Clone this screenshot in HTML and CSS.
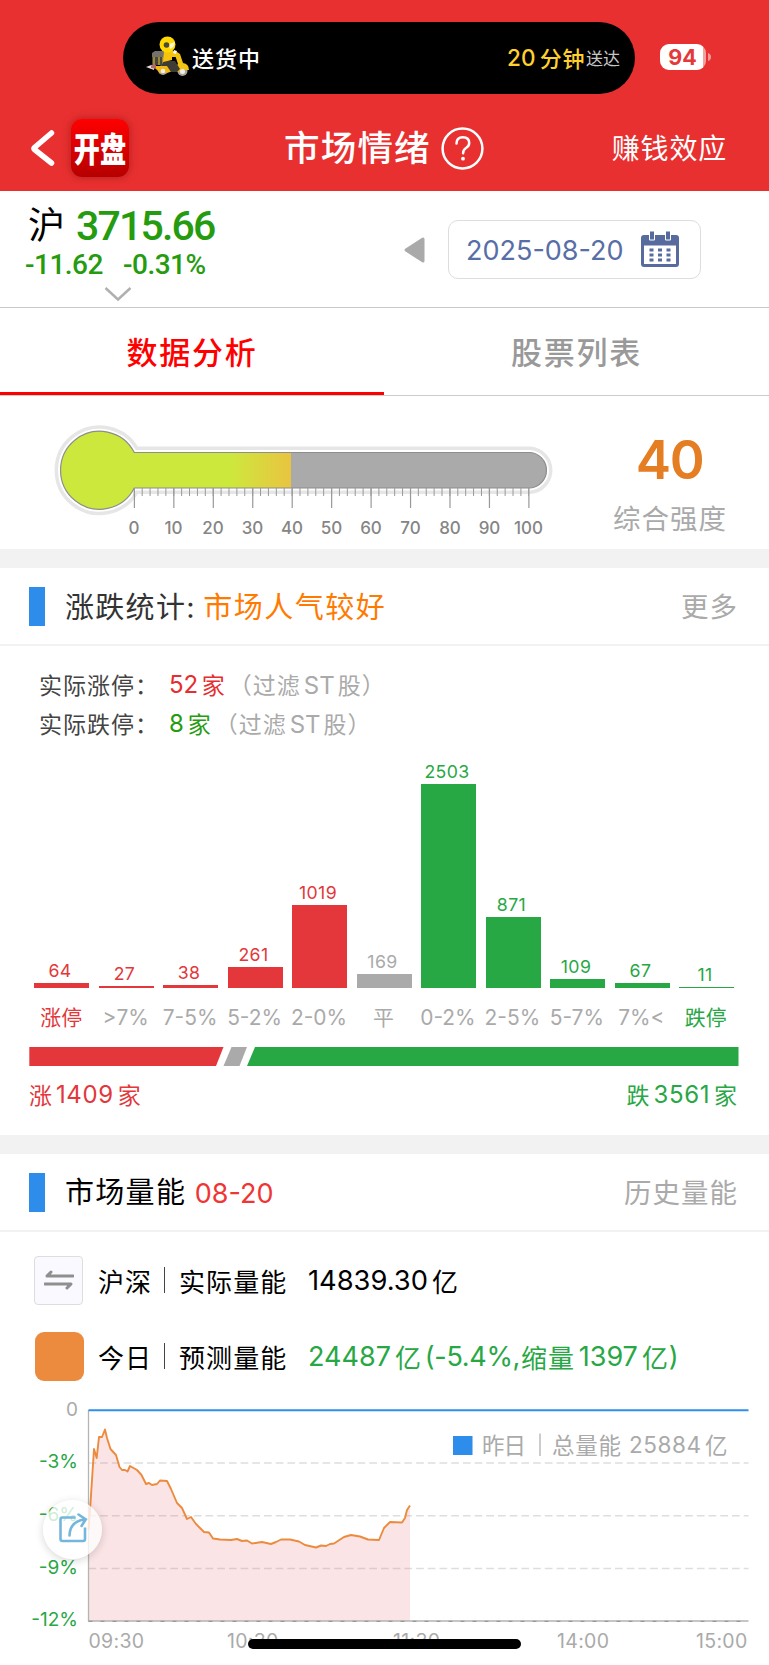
FILE: index.html
```html
<!DOCTYPE html>
<html lang="zh-CN">
<head>
<meta charset="utf-8">
<title>市场情绪</title>
<link rel="stylesheet" href="styles.css">
</head>
<body>
<header class="top">
  <div class="status">
    <div class="island">
      <svg class="rider" width="44" height="42" viewBox="0 0 44 42">
        <path d="M0 31l8-3v6z" fill="#e8dfe6"/><path d="M5 29.500l5-1.500v5l-5-1z" fill="#b5686a"/>
        <circle cx="17" cy="34" r="5" fill="#a8a49a"/><circle cx="36.500" cy="35" r="5" fill="#aaa69c"/>
        <path d="M6 17l3-2h14l-1 14H6z" fill="#74716a"/><path d="M6 21h12v8H6z" fill="#49463d"/>
        <path d="M8 21v8M13 21v8M17 21v8" stroke="#d2b42c" stroke-width="1.200" fill="none"/>
        <path d="M31 16l3 2 3 9q6 1 6 7h-5l-7 2-4-3 5-5-3-9z" fill="#f2c414"/>
        <path d="M10 30h12l5 5-6 2H14l-4-4z" fill="#f2b814"/>
        <path d="M18 25h11l5 8-3 3h-6l-4-6h-6z" fill="#3e3c35"/>
        <path d="M18 15h9l5 2 1 4h-7v3l-9 2z" fill="#f6c40f"/>
        <circle cx="21.500" cy="8.500" r="8" fill="#ffd900"/><path d="M23 8l6-2q-1 6-5 7z" fill="#fff6c8"/><circle cx="20.500" cy="9" r="2.800" fill="#4a4a35"/>
        <path d="M28 14l3 1-1 3-3-1z" fill="#fff"/><circle cx="17" cy="35" r="2.300" fill="#eee"/><circle cx="36.500" cy="35.500" r="2.500" fill="#eee"/>
      </svg>
      <span class="delivering">送货中</span>
      <span class="eta"><b>20</b><b class="mins">分钟</b><i>送达</i></span>
    </div>
    <div class="battery"><span>94</span></div>
    <svg class="nub" width="6" height="10" viewBox="0 0 6 10"><path d="M1 1q3 1 3 4t-3 4z" fill="#f19a98"/></svg>
  </div>
  <nav class="titlebar">
    <svg class="back" width="26" height="38" viewBox="0 0 26 38"><path d="M22.500 4L5.500 18.500Q4.500 19.500 5.500 20.500L22.500 34" fill="none" stroke="#fff" stroke-width="5.500" stroke-linecap="round" stroke-linejoin="round"/></svg>
    <div class="app"><span>开盘</span></div>
    <h1>市场情绪</h1>
    <svg class="help" width="43" height="43" viewBox="0 0 43 43"><circle cx="21.500" cy="21.500" r="19.900" fill="none" stroke="#fff" stroke-width="2.500"/><path d="M15.500 16.500q0-6.300 6.400-6.300 6.300 0 6.300 5.800 0 3.100-3.200 5-2.900 1.800-2.900 5.200" fill="none" stroke="#fff" stroke-width="2.500" stroke-linecap="round"/><circle cx="22" cy="31.700" r="1.900" fill="#fff"/></svg>
    <a class="effect">赚钱效应</a>
  </nav>
</header>

<section class="indexbar">
  <div class="quote">
    <div class="main"><span>沪</span><b>3715.66</b></div>
    <div class="delta"><span>-11.62</span><span>-0.31%</span></div>
    <svg class="chev" width="30" height="16" viewBox="0 0 30 16"><path d="M2.500 2L15 13.500 27.500 2" fill="none" stroke="#b0b0b0" stroke-width="2.500"/></svg>
  </div>
  <svg class="prev" width="22" height="28" viewBox="0 0 22 28"><path d="M2 14L19 3V25Z" fill="#aaa" stroke="#aaa" stroke-width="3" stroke-linejoin="round"/></svg>
  <div class="date"><span>2025-08-20</span>
    <svg width="38" height="36" viewBox="0 0 38 36"><rect y="4" width="38" height="32" rx="3" fill="#586b9f"/><rect x="3" y="14.500" width="32" height="18.500" fill="#fff"/><path d="M8.500 0h5v9h-5zM24.500 0h5v9h-5z" fill="#586b9f" stroke="#fff" stroke-width="1"/><path d="M10.500 17.500v13M19 17.500v13M27.500 17.500v13" stroke="#586b9f" stroke-width="4" stroke-dasharray="3 2"/></svg>
  </div>
</section>

<div class="tabs"><div class="tab on">数据分析</div><div class="tab">股票列表</div></div>

<section class="thermo">
  <svg width="580" height="153" viewBox="0 396 580 153">
    <defs>
      <linearGradient id="heat" gradientUnits="userSpaceOnUse" x1="230" y1="0" x2="291" y2="0"><stop offset="0" stop-color="#cde83d"/><stop offset="1" stop-color="#e9c440"/></linearGradient>
      <clipPath id="level"><rect x="50" y="420" width="241" height="100"/></clipPath>
      <path id="tube" d="M134.300 452.500H530A17.800 17.800 0 0 1 530 488H134.300A39 39 0 1 1 134.300 452.500Z"/>
    </defs>
    <use href="#tube" fill="none" stroke="#e6e6e6" stroke-width="12"/>
    <use href="#tube" fill="#aaa" stroke="#fff" stroke-width="5"/>
    <use href="#tube" fill="#aaa"/>
    <use href="#tube" fill="url(#heat)" clip-path="url(#level)"/>
    <use href="#tube" fill="none" stroke="#8e8e8e" stroke-width="1.200"/>
    <path d="M133.800 492H529" stroke="#999" stroke-width="8" stroke-dasharray="1 6.890"/>
    <path d="M133.800 498H529.500" stroke="#999" stroke-width="20" stroke-dasharray="1.200 38.250"/>
    <g class="scale"><text x="134" y="533.500">0</text><text x="173.500" y="533.500">10</text><text x="213" y="533.500">20</text><text x="252.500" y="533.500">30</text><text x="292" y="533.500">40</text><text x="331.500" y="533.500">50</text><text x="371" y="533.500">60</text><text x="410.500" y="533.500">70</text><text x="450" y="533.500">80</text><text x="489.500" y="533.500">90</text><text x="528.500" y="533.500">100</text></g>
  </svg>
  <div class="score"><b>40</b><span>综合强度</span></div>
</section>

<section class="card">
  <div class="head"><h2>涨跌统计: <em>市场人气较好</em></h2><a>更多</a></div>
  <div class="limits">
    <div class="limit"><span>实际涨停：</span><p class="up"><b>52</b><span>家</span></p><i>（过滤<u>ST</u>股）</i></div>
    <div class="limit"><span>实际跌停：</span><p class="down"><b>8</b><span>家</span></p><i>（过滤<u>ST</u>股）</i></div>
  </div>
  <div class="bars">
    <div class="col r"><span>64</span><div style="height:5px"></div></div>
    <div class="col r"><span>27</span><div style="height:2px"></div></div>
    <div class="col r"><span>38</span><div style="height:3px"></div></div>
    <div class="col r"><span>261</span><div style="height:21px"></div></div>
    <div class="col r"><span>1019</span><div style="height:83px"></div></div>
    <div class="col n"><span>169</span><div style="height:14px"></div></div>
    <div class="col g"><span>2503</span><div style="height:204px"></div></div>
    <div class="col g"><span>871</span><div style="height:71px"></div></div>
    <div class="col g"><span>109</span><div style="height:9px"></div></div>
    <div class="col g"><span>67</span><div style="height:5px"></div></div>
    <div class="col g"><span>11</span><div style="height:1px"></div></div>
  </div>
  <div class="ranges"><span class="r">涨停</span><span>&gt;7%</span><span>7-5%</span><span>5-2%</span><span>2-0%</span><span>平</span><span>0-2%</span><span>2-5%</span><span>5-7%</span><span>7%&lt;</span><span class="g">跌停</span></div>
  <svg class="ratio" width="710" height="20" viewBox="0 0 710 20"><path d="M.3 0H194.500L187 19H.3Z" fill="#e3373b"/><path d="M202.500 0H218L210.500 19H194.500Z" fill="#aaa"/><path d="M226 0H709.500V19H218Z" fill="#28a745"/></svg>
  <div class="totals"><p class="r"><span>涨</span><b>1409</b><span>家</span></p><p class="g"><span>跌</span><b>3561</b><span>家</span></p></div>
</section>

<section class="card volume">
  <div class="head"><h2>市场量能 <b>08-20</b></h2><a>历史量能</a></div>
  <div class="metrics">
    <div class="metric">
      <div class="swap"><svg width="30" height="22" viewBox="0 0 30 22"><path d="M29 7H3L7 3M1 15H27L23 19" fill="none" stroke="#8f8f8f" stroke-width="3" stroke-linecap="round" stroke-linejoin="round"/><path d="M2 6.500L7 2V7ZM28 15.500L23 20V15Z" fill="#8f8f8f"/></svg></div>
      <span>沪深</span><hr><span>实际量能</span><p><b>14839.30</b><span>亿</span></p>
    </div>
    <div class="metric">
      <div class="today"></div>
      <span>今日</span><hr><span>预测量能</span><p class="g"><b>24487</b><span>亿</span><b class="pct">(-5.4%,</b><span class="shrink">缩量</span><b>1397</b><span>亿</span><b class="close">)</b></p>
    </div>
  </div>
  <div class="chart">
    <svg width="769" height="275" viewBox="0 1390 769 275">
      <path d="M88.500 1463H748.500M88.500 1515.700H748.500M88.500 1568.500H748.500" stroke="#dedede" stroke-width="1.500" stroke-dasharray="7.700 4"/>
      <path d="M88.500 1530L90.700 1500 94 1449 96.700 1458 99 1437 102 1437 105 1429.500 107 1438 110.500 1449 116 1455 119.500 1467 122 1470 125 1470 127.500 1471.500 130 1466 137 1470 141.500 1475 146 1484 149 1483 152 1485 157 1484 160 1480.500 167 1481 171 1489 177 1503 182 1508 187 1519 191 1517 196 1524 204 1532 209 1532.500 213 1538.500 220 1539.500 231 1540 237 1539 242 1541 247 1540.500 252 1543.500 262 1542 271 1544 276 1542 281 1539.500 290 1539.500 299 1541.500 305 1545 316 1547.500 321 1545.500 326 1546 330 1544 334 1543.500 344 1537 351 1535 360 1536.500 368 1539.500 379 1540 384 1528 390 1522 402 1522.500 405 1518 407 1510 410 1505.500V1621H88.500Z" fill="#e46a6e" fill-opacity=".18"/>
      <path d="M88.500 1410V1621H748.500" stroke="#b4b4b4" stroke-width="1.300" fill="none"/>
      <path d="M88.500 1621.300H748.500" stroke="#999" stroke-width="1.300" stroke-dasharray="4 8"/>
      <path d="M88.500 1530L90.700 1500 94 1449 96.700 1458 99 1437 102 1437 105 1429.500 107 1438 110.500 1449 116 1455 119.500 1467 122 1470 125 1470 127.500 1471.500 130 1466 137 1470 141.500 1475 146 1484 149 1483 152 1485 157 1484 160 1480.500 167 1481 171 1489 177 1503 182 1508 187 1519 191 1517 196 1524 204 1532 209 1532.500 213 1538.500 220 1539.500 231 1540 237 1539 242 1541 247 1540.500 252 1543.500 262 1542 271 1544 276 1542 281 1539.500 290 1539.500 299 1541.500 305 1545 316 1547.500 321 1545.500 326 1546 330 1544 334 1543.500 344 1537 351 1535 360 1536.500 368 1539.500 379 1540 384 1528 390 1522 402 1522.500 405 1518 407 1510 410 1505.500" fill="none" stroke="#ec8b3e" stroke-width="1.900" stroke-linejoin="round"/>
      <path d="M88.500 1410.200H748.500" stroke="#2e8fec" stroke-width="2"/>
      <g class="yaxis"><text class="zero" x="78" y="1415.500">0</text><text x="78" y="1468">-3%</text><text x="78" y="1520.500">-6%</text><text x="78" y="1573.500">-9%</text><text x="78" y="1626">-12%</text></g>
      <g class="xaxis"><text x="88.500" y="1648">09:30</text><text x="227" y="1648">10:30</text><text x="393" y="1648">11:30</text><text x="557" y="1648">14:00</text><text x="696" y="1648">15:00</text></g>
      <rect x="453" y="1436" width="19.500" height="19" fill="#2e8ceb"/>
      <path d="M540 1433.500V1456" stroke="#aaa" stroke-width="1.200"/>
      <g class="legend"><text x="482" y="1453.500" textLength="44">昨日</text><text x="552" y="1453.500" textLength="69">总量能</text><text x="629" y="1453" textLength="72">25884</text><text x="705" y="1453.500">亿</text></g>
    </svg>
    <div class="share"><svg width="30" height="32" viewBox="0 0 30 32"><path d="M17.500 5.500H4.500Q2.500 5.500 2.500 7.500V27Q2.500 29 4.500 29H25Q27 29 27 27V15.500" fill="none" stroke="#75b6dc" stroke-width="2.600"/><path d="M11.500 23.500Q12 9 27 7.500M20.500 2.500L27.800 7.300 23.500 14" fill="none" stroke="#75b6dc" stroke-width="2.600" stroke-linecap="round"/></svg></div>
    <div class="homebar"></div>
  </div>
</section>
</body>
</html>
```
FILE: styles.css
```css
* { box-sizing: border-box; margin: 0; padding: 0; }
body { width: 769px; height: 1665px; overflow: hidden; background: #fff; color: #000; font-family: Inter, "Noto Sans CJK SC", sans-serif; }
svg { display: block; flex: none; }
span, b, i, em, a, u, h1, h2 { font-style: normal; text-decoration: none; font-weight: 400; white-space: nowrap; }

.top { height: 191px; background: #e93030; color: #fff; }
.status { height: 95px; padding: 22px 0 0 123px; display: flex; align-items: flex-start; }
.island { width: 512px; height: 72px; border-radius: 36px; background: #000; display: flex; align-items: center; padding: 0 15px 0 23px; }
.rider { margin-top: -2px; }
.delivering { font-size: 22px; letter-spacing: 1px; margin: -2px auto 0 2px; font-weight: 500; }
.eta { display: flex; align-items: center; color: #ffd02e; margin-top: -2px; }
.eta b { font-size: 22.500px; letter-spacing: .2px; font-weight: 500; margin-top: 1px; }
.eta .mins { margin: 0 1px 0 4px; letter-spacing: .6px; font-size: 22px; }
.eta i { font-size: 17px; color: #c6c6c6; margin-top: 1px; }
.battery { width: 46px; height: 26px; margin: 22px 0 0 25px; border-radius: 9px; background: linear-gradient(90deg, #fff 43px, #f6a09e 43px); display: grid; place-items: center; padding-right: 1px; }
.battery span { color: #e5383a; font-size: 21.500px; font-weight: 700; line-height: 27px; }
.nub { margin: 30px 0 0 1px; }
.titlebar { height: 96px; display: flex; align-items: center; padding: 10px 42px 0 29px; }
.back { margin-right: 16px; }
.app { width: 58px; height: 58px; border-radius: 11px; background: linear-gradient(#f00, #b50000); box-shadow: 0 0 8px rgba(90, 0, 0, .4); display: flex; align-items: center; justify-content: center; }
.app span { font-family: "Noto Sans CJK SC", sans-serif; font-size: 34px; line-height: 50px; font-weight: 900; transform: scaleX(.77); }
h1 { font-size: 35.500px; font-weight: 500; letter-spacing: 1.200px; margin: 1px 0 0 155px; line-height: 50px; }
.help { margin-left: 10px; }
.effect { margin-left: auto; font-size: 28px; letter-spacing: .8px; margin-top: -3px; }

.indexbar { height: 117px; border-bottom: 1px solid #c8c8c8; display: flex; }
.quote { width: 404px; padding: 13px 0 0 25px; color: #259b10; }
.main { display: flex; align-items: center; height: 44px; }
.main span { color: #000; font-size: 37px; width: 48px; margin-left: 3px; line-height: 44px; }
.main b { font: 500 41px/44px Roboto, sans-serif; letter-spacing: -1.800px; margin-top: -1px; }
.delta { display: flex; font: 500 28px/32px Roboto, sans-serif; margin-top: 1px; }
.delta span { font-weight: 500; width: 98px; letter-spacing: -.5px; }
.chev { margin: 5px 0 0 78px; }
.prev { margin-top: 45px; }
.date { width: 253px; height: 59px; margin: 29px 0 0 22px; border: 1px solid #ddd; border-radius: 10px; display: flex; align-items: center; justify-content: space-between; padding: 0 21px 0 17px; color: #586ea6; font-size: 27px; }
.date span { margin-top: 1px; }
.date svg { margin-top: -1px; }

.tabs { height: 88px; display: flex; border-bottom: 1px solid #ccc; }
.tab { flex: 1; padding-top: 22px; text-align: center; font-size: 31px; line-height: 46px; letter-spacing: 1.700px; color: #999; font-weight: 500; }
.tab.on { flex: none; width: 384px; color: #f00; border-bottom: 3px solid #f00; }

.thermo { height: 153px; display: flex; }
.scale { font: 500 17px Inter; fill: #858585; text-anchor: middle; }
.score { width: 180px; padding-top: 34px; display: flex; flex-direction: column; align-items: center; }
.score b { font-size: 53px; line-height: 60px; font-weight: 600; color: #e57e22; letter-spacing: -1.500px; margin-right: 1px; }
.score span { font-size: 27.500px; line-height: 40px; letter-spacing: 1px; color: #aaa; margin-top: 9px; }

.card { border-top: 19px solid #f2f2f2; }
.head { height: 78px; border-bottom: 2px solid #f2f2f2; display: flex; align-items: center; padding: 0 31px 0 29px; }
.head::before { content: ""; width: 16px; height: 39px; background: #2e8ceb; margin-right: 20px; }
h2 { font-size: 29px; line-height: 42px; letter-spacing: 1.300px; color: #333; padding-top: 3px; }
h2 em { color: #ff7a00; margin-left: -2px; letter-spacing: 1.500px; }
.head a { margin: -3px 0 0 auto; font-size: 27.500px; letter-spacing: 1px; color: #aaa; }
.limits { padding: 18px 0 0 39px; height: 98px; }
.limit { display: flex; align-items: center; height: 39px; font-size: 23px; color: #444; letter-spacing: 1px; }
.limit > span { width: 130px; }
.limit p { display: flex; align-items: center; gap: 4px; }
.limit b { font-size: 24px; letter-spacing: -.2px; margin-top: 2px; }
.limit i { color: #aaa; margin-left: 3px; }
.limit u { font-size: 24px; margin: 0 3px; letter-spacing: 0; }
.up { color: #e62d30; } .down { color: #259b10; }
.r { color: #e3373b; } .g { color: #28a745; } .n { color: #aaa; }
.bars { height: 244px; padding: 0 35px 0 34px; display: flex; justify-content: space-between; align-items: flex-end; }
.col { width: 55px; display: flex; flex-direction: column; align-items: center; }
.col span { font-size: 17.700px; line-height: 25px; letter-spacing: .4px; margin-right: 3px; }
.col div { width: 100%; background: currentColor; }
.ranges { display: flex; padding: 0 31px 0 29px; height: 59px; align-items: center; color: #aaa; font-size: 20.900px; }
.ranges span { flex: 1 1 0; text-align: center; line-height: 30px; }
.ratio { margin-left: 29px; }
.totals { display: flex; justify-content: space-between; padding: 7px 32px 0 29px; height: 68px; font-size: 23px; }
.totals p { display: flex; height: 39px; align-items: center; gap: 4px; }
.totals b { font-size: 24px; letter-spacing: .6px; margin-top: 2px; }

.volume h2 { color: #000; }
.volume h2 b { color: #f03535; font-size: 27px; letter-spacing: 0; margin-left: -1px; }
.metrics { padding-top: 12px; height: 158px; }
.metric { height: 78px; display: grid; grid-template-columns: 64px 66px 15px 129px 1fr; align-items: center; padding: 0 0 6px 34px; font-size: 26px; letter-spacing: 1.100px; }
.metric + .metric { height: 68px; padding: 4px 0 4px 34px; }
.metric hr { width: 1px; height: 26px; border: 0; background: #444; }
.swap { width: 49px; height: 49px; border: 1px solid #ddd; border-radius: 4px; background: #f9f9ff; display: grid; place-items: center; }
.today { width: 49px; height: 49px; margin-left: 1px; border-radius: 9px; background: #ec8b3e; }
.metric p { display: flex; align-items: center; gap: 4px; }
.metric b { font-size: 27.300px; letter-spacing: 0; margin-top: 1px; }
.metric .g b { font-size: 27px; }
.metric .g span { letter-spacing: .8px; }
.metric .g .pct { letter-spacing: -.3px; margin-left: -1px; }
.metric .g .shrink { margin-left: -3px; }
.metric .g .close { margin-left: -4px; }
.chart { position: relative; height: 275px; }
.yaxis { font: 400 19px Inter; text-anchor: end; fill: #28a745; }
.yaxis .zero { fill: #aaa; }
.xaxis { font: 400 19.500px Inter; fill: #aaa; letter-spacing: .3px; }
.legend { font: 400 22.500px Inter, "Noto Sans CJK SC"; fill: #aaa; }
.share { position: absolute; left: 43px; top: 110px; width: 59px; height: 59px; border-radius: 50%; background: rgba(255, 255, 255, .78); box-shadow: 0 2px 9px rgba(0, 0, 0, .16); display: grid; place-items: center; }
.share svg { margin-top: -4px; }
.homebar { position: absolute; left: 248px; top: 249px; width: 273px; height: 10px; border-radius: 5px; background: #000; }
```
